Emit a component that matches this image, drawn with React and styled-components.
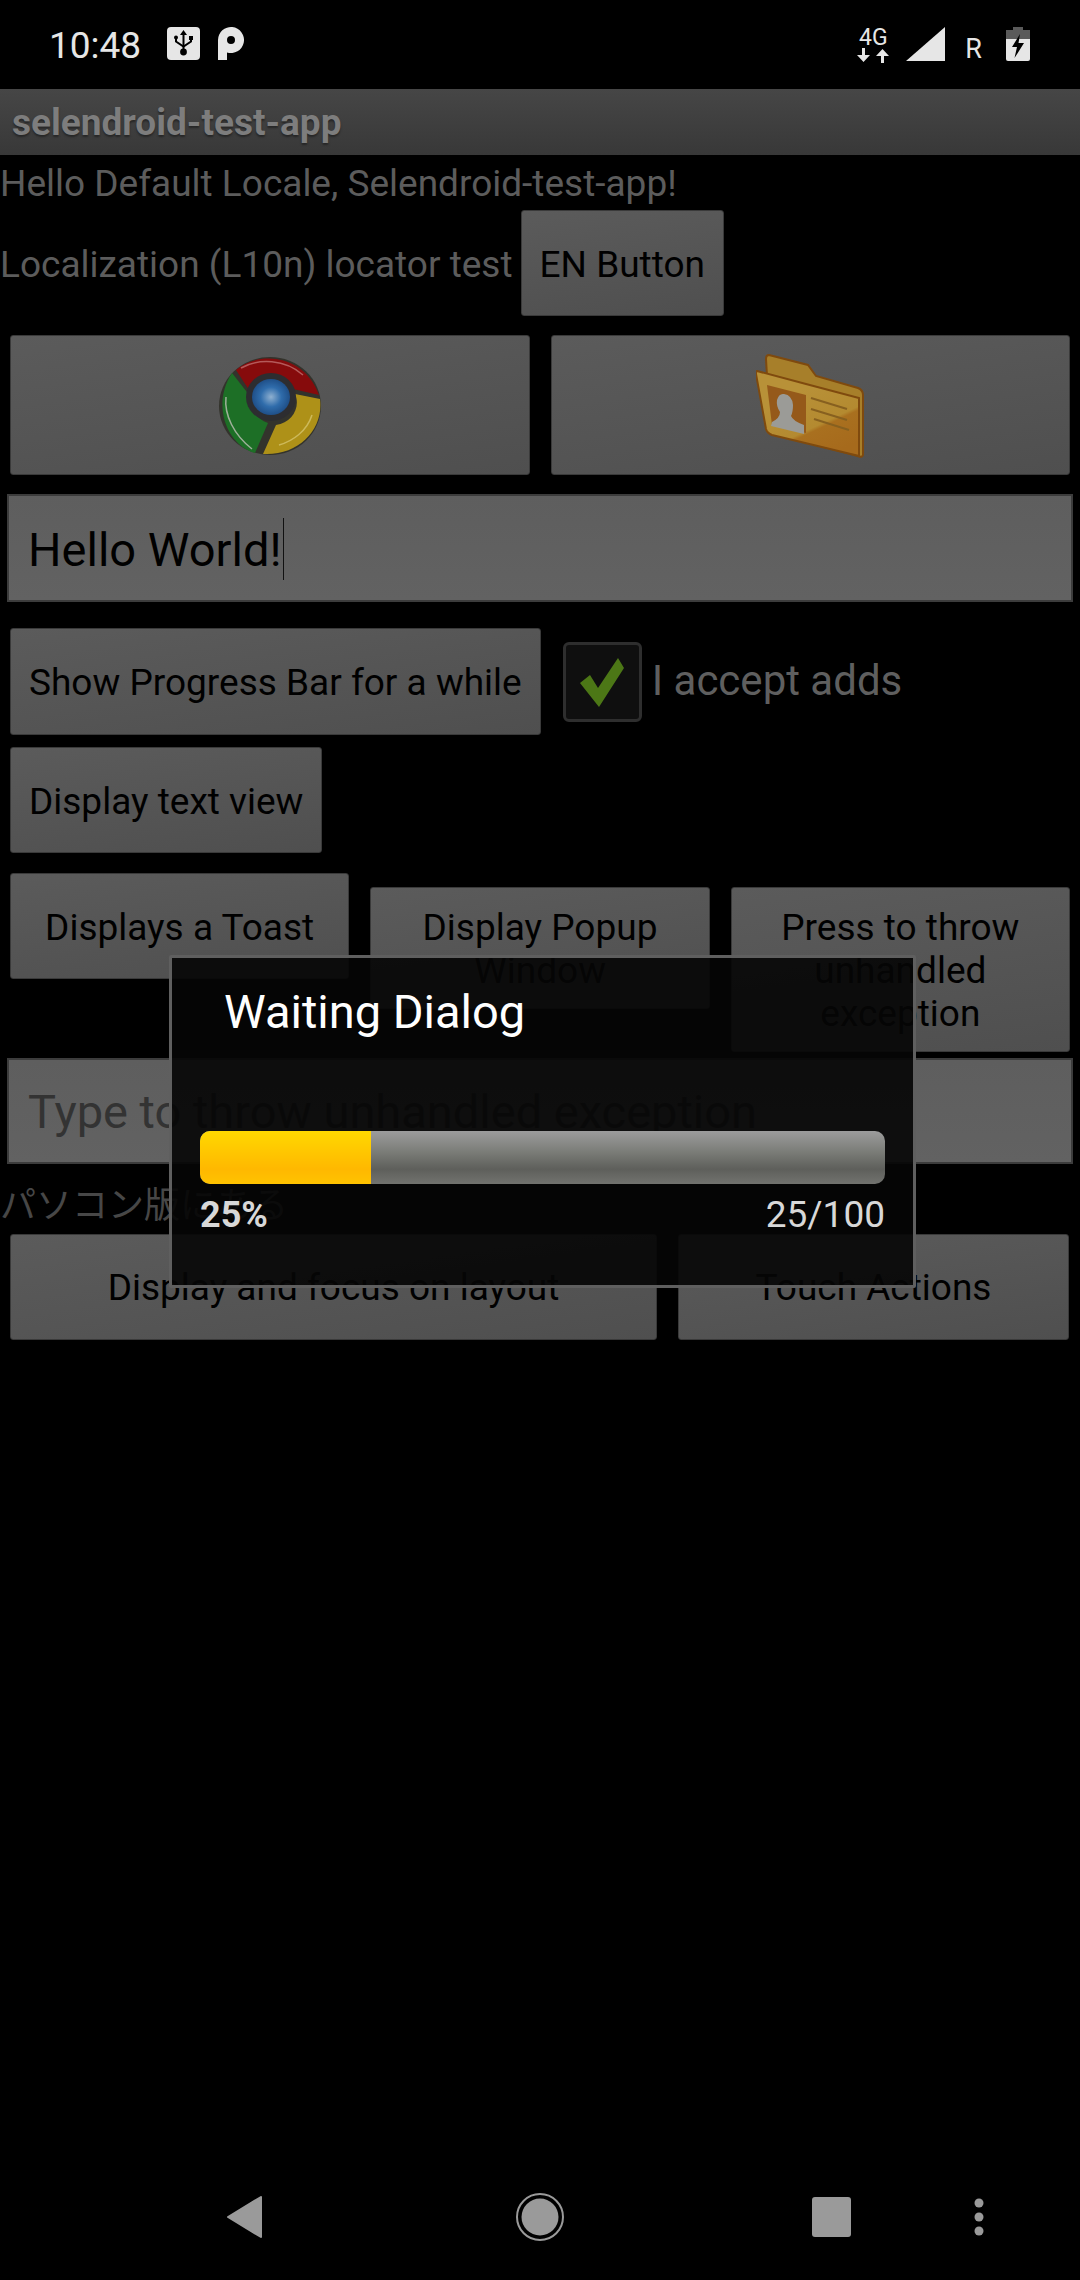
import styled, { createGlobalStyle } from "styled-components";

const GlobalStyle = createGlobalStyle`
  html, body {
    margin: 0;
    padding: 0;
    background: #000;
  }
  * {
    box-sizing: border-box;
  }
`;

const Screen = styled.div`
  position: relative;
  width: 1080px;
  height: 2280px;
  display: flex;
  flex-direction: column;
  overflow: hidden;
  background: #000;
  font-family: Roboto, "Noto Sans CJK JP", sans-serif;
  font-size: 37px;
`;

const StatusBar = styled.div`
  height: 89px;
  flex: none;
  display: flex;
  align-items: flex-start;
  justify-content: space-between;
  padding: 27px 50px 0 49px;
  color: #e6e6e6;
`;

const StatusGroup = styled.div`
  display: flex;
  align-items: flex-start;
`;

const Clock = styled.span`
  font-size: 37px;
  line-height: 37px;
  margin: 0 26px 0 0;
`;

const NetworkBadge = styled.div`
  width: 34px;
  margin-right: 16px;
  display: flex;
  flex-direction: column;
  align-items: center;
  font-size: 23px;
  line-height: 21px;
`;

const RoamingMark = styled.span`
  font-size: 27px;
  line-height: 27px;
  margin: 9px 24px 0 20px;
`;

const ActionBar = styled.div`
  height: 66px;
  flex: none;
  display: flex;
  align-items: center;
  padding: 0 0 0 12px;
  background: linear-gradient(#464646, #383838);
  color: #7d7d7d;
  font-size: 37px;
  font-weight: 700;
  text-shadow: 0 2px 2px #262626;
`;

const Content = styled.div`
  display: flex;
  flex-direction: column;
`;

const HelloText = styled.div`
  height: 43px;
  line-height: 57px;
  color: #5c5c5c;
  white-space: nowrap;
`;

const Row = styled.div`
  display: flex;
  align-items: ${(p) => p.$align || "flex-start"};
  gap: ${(p) => p.$gap || 0}px;
  margin-top: ${(p) => p.$top || 0}px;
  padding: 0 ${(p) => p.$side ?? 10}px;
`;

const Label = styled.span`
  padding-top: 3px;
  color: #5c5c5c;
  white-space: nowrap;
`;

const Button = styled.div`
  display: flex;
  align-items: center;
  justify-content: center;
  flex: ${(p) => p.$flex || "none"};
  min-width: 0;
  min-height: ${(p) => p.$height || 106}px;
  padding: 18px 18px 16px;
  margin-left: ${(p) => p.$left || 0}px;
  border: 1px solid #3a3a3a;
  border-radius: 3px;
  background: linear-gradient(172deg, #5b5b5b, #4f4f4f);
  color: #000;
  line-height: 43px;
  text-align: center;
  white-space: ${(p) => (p.$wrap ? "normal" : "nowrap")};
`;

const TextBox = styled.div`
  display: flex;
  align-items: center;
  height: ${(p) => p.$height || 108}px;
  margin-top: ${(p) => p.$top || 0}px;
  margin-left: 7px;
  width: 1066px;
  padding-left: 19px;
  padding-top: 2px;
  border: 2px solid #3c3c3c;
  background: linear-gradient(#5e5e5e, #626262);
  color: ${(p) => (p.$hint ? "#333" : "#000")};
  font-size: 47px;
  white-space: nowrap;
`;

const Caret = styled.span`
  width: 1px;
  height: 62px;
  margin-left: 1px;
  background: #111;
`;

const CheckBox = styled.div`
  flex: none;
  width: 79px;
  height: 80px;
  margin: 14px 10px 0 22px;
  display: flex;
  align-items: center;
  justify-content: center;
  border: 3px solid #2e2e2e;
  border-radius: 6px;
  background: #0f0f0f;
`;

const CheckLabel = styled.span`
  margin-top: 29px;
  color: #5f5f5f;
  font-size: 42px;
  line-height: 48px;
  white-space: nowrap;
`;

const JapaneseText = styled.div`
  height: 70px;
  padding-top: 17px;
  font-size: 36px;
  line-height: 50px;
  color: #474747;
  white-space: nowrap;
`;

const Dialog = styled.div`
  position: absolute;
  left: 169px;
  top: 955px;
  width: 747px;
  height: 333px;
  padding: 0 28px;
  border: 3px solid #5f5f5f;
  border-radius: 2px;
  background: rgba(5, 5, 5, 0.91);
`;

const DialogTitle = styled.div`
  height: 173px;
  padding: 24px 0 0 24px;
  color: #fff;
  font-size: 47px;
  line-height: 60px;
`;

const ProgressTrack = styled.div`
  height: 53px;
  border-radius: 10px;
  overflow: hidden;
  background: linear-gradient(#9c9c9c, #7a7c77 40%, #5e5f5b 72%, #72736f);
`;

const ProgressFill = styled.div`
  height: 100%;
  background: linear-gradient(#ffd800, #ffb800 72%, #ffc300);
`;

const ProgressInfo = styled.div`
  display: flex;
  justify-content: space-between;
  margin-top: 6px;
  color: #d8d8d8;
  line-height: 50px;
`;

const Percent = styled.span`
  font-weight: 700;
  font-size: 36px;
`;

const NavBar = styled.div`
  position: relative;
  margin-top: auto;
  height: 100px;
  flex: none;
  display: flex;
  align-items: center;
  padding: 0 0 26px 226px;
`;

const NavSlot = styled.div`
  width: ${(p) => p.$width}px;
  flex: none;
  display: flex;
`;

function UsbIcon() {
  return (
    <svg width="33" height="33" viewBox="0 0 33 33">
      <rect width="33" height="33" rx="4" fill="#e6e6e6" />
      <g stroke="#000" strokeWidth="2" fill="none">
        <path d="M16.5 5V24" />
        <path d="M9 11V14.5L16.5 19.5L24 14.5V11" />
      </g>
      <path d="M16.5 3L20 8H13Z" fill="#000" />
      <circle cx="16.5" cy="25" r="3.4" fill="#000" />
      <circle cx="9" cy="10.5" r="2" fill="#000" />
      <rect x="22" y="9" width="4" height="4" fill="#000" />
    </svg>
  );
}

function PIcon() {
  return (
    <svg width="26" height="33" viewBox="0 0 26 33" style={{ marginLeft: 18 }}>
      <path
        fillRule="evenodd"
        fill="#e6e6e6"
        d="M0 33V13A13 13 0 1 1 9 25.4V33ZM13 9A4 4 0 1 0 13 17A4 4 0 1 0 13 9Z"
      />
    </svg>
  );
}

function TransferArrows() {
  return (
    <svg width="34" height="15" viewBox="0 0 34 15">
      <path d="M6 0H9V7H14L7.5 14L1 7H6Z" fill="#e6e6e6" />
      <path d="M25 15H28V8H33L26.5 1L20 8H25Z" fill="#e6e6e6" />
    </svg>
  );
}

function SignalIcon() {
  return (
    <svg width="39" height="34" viewBox="0 0 39 34">
      <path d="M39 0V34H0Z" fill="#e6e6e6" />
    </svg>
  );
}

function BatteryIcon() {
  return (
    <svg width="24" height="34" viewBox="0 0 24 34">
      <path d="M7 0H17V3H24V12H0V3H7Z" fill="#5a5a5a" />
      <path d="M0 12H24V32Q24 34 22 34H2Q0 34 0 32Z" fill="#e6e6e6" />
      <path d="M14 7L6 20H11L8.5 31L18 16H12.5Z" fill="#000" />
    </svg>
  );
}

function ChromeIcon() {
  return (
    <svg width="102" height="98" viewBox="0 0 102 98">
      <defs>
        <radialGradient id="chromeBlue">
          <stop offset="0" stopColor="#8fb0d0" />
          <stop offset="0.55" stopColor="#2f6cab" />
          <stop offset="1" stopColor="#1f4f88" />
        </radialGradient>
      </defs>
      <ellipse cx="51" cy="49" rx="51" ry="49" fill="#33332c" />
      <path d="M17 13C38 -6 85 -4 100 38L74 32C62 18 40 22 32 36Z" fill="#860b0c" />
      <path d="M13 16L31 39C30 52 38 62 49 66L36 96C8 88 -8 48 13 16Z" fill="#1d6f26" />
      <path d="M76 37L101 42C105 72 80 99 44 97L57 68C73 66 82 50 76 37Z" fill="#ae9118" />
      <ellipse cx="52" cy="40" rx="25" ry="24" fill="#2d2d30" />
      <ellipse cx="52" cy="40" rx="19" ry="18" fill="url(#chromeBlue)" />
      <path d="M7 40C5 58 15 78 33 92" stroke="#9fb09a" strokeWidth="1.5" fill="none" />
      <path d="M22 11C40 1 66 2 84 18" stroke="#b45a5a" strokeWidth="1.5" fill="none" />
      <path d="M60 88C74 84 88 74 93 58" stroke="#cdb95a" strokeWidth="1.5" fill="none" />
    </svg>
  );
}

function FolderIcon() {
  return (
    <svg width="108" height="104" viewBox="0 0 108 104">
      <defs>
        <linearGradient id="folderFace" x1="0.3" y1="0.3" x2="0.7" y2="1">
          <stop offset="0" stopColor="#b89138" />
          <stop offset="0.55" stopColor="#b48a30" />
          <stop offset="0.6" stopColor="#a9701f" />
          <stop offset="1" stopColor="#a66a1c" />
        </linearGradient>
      </defs>
      <path
        d="M13 1L52 11L60 22L102 34Q107 36 107 41V101Q106 104 102 102L20 80Q15 78 14 74L10 5Q10 1 13 1Z"
        fill="#a77f2a"
        stroke="#7f4a0e"
        strokeWidth="2"
      />
      <path
        d="M1 17L50 30L103 44V102L16 81Q11 79 10 75L0 20Q0 17 1 17Z"
        fill="url(#folderFace)"
        stroke="#7f4a0e"
        strokeWidth="2"
      />
      <path d="M11 31L50 41V79L16 71Z" fill="#95591a" />
      <path
        d="M28 40Q36 41 37 51Q37 58 35 62Q37 67 48 71V80L15 72L16 68Q24 64 24 58Q20 52 21 46Q23 39 28 40Z"
        fill="#9b9b97"
      />
      <path
        d="M55 44L91 55M55 55L91 66M58 65L93 76"
        stroke="#87601f"
        strokeWidth="2"
        fill="none"
      />
    </svg>
  );
}

function CheckMark() {
  return (
    <svg width="48" height="52" viewBox="0 0 48 52">
      <path d="M2 27L12 19L20 32L40 2L46 12L21 51Z" fill="#4c7716" />
    </svg>
  );
}

function BackIcon() {
  return (
    <svg width="37" height="42" viewBox="0 0 37 42">
      <path d="M35 1V41L2 21Z" fill="#9a9a9a" stroke="#9a9a9a" strokeWidth="2" strokeLinejoin="round" />
    </svg>
  );
}

function HomeIcon() {
  return (
    <svg width="48" height="48" viewBox="0 0 48 48">
      <circle cx="24" cy="24" r="23" fill="none" stroke="#9a9a9a" strokeWidth="2" />
      <circle cx="24" cy="24" r="18.5" fill="#9a9a9a" />
    </svg>
  );
}

function RecentsIcon() {
  return (
    <svg width="39" height="40" viewBox="0 0 39 40">
      <rect width="39" height="40" rx="3" fill="#9a9a9a" />
    </svg>
  );
}

function MenuIcon() {
  return (
    <svg width="10" height="38" viewBox="0 0 10 38">
      <circle cx="5" cy="5" r="4.5" fill="#9a9a9a" />
      <circle cx="5" cy="19" r="4.5" fill="#9a9a9a" />
      <circle cx="5" cy="33" r="4.5" fill="#9a9a9a" />
    </svg>
  );
}

export default function App() {
  const progress = 25;

  return (
    <Screen>
      <GlobalStyle />
      <StatusBar>
        <StatusGroup>
          <Clock>10:48</Clock>
          <UsbIcon />
          <PIcon />
        </StatusGroup>
        <StatusGroup>
          <NetworkBadge>
            4G
            <TransferArrows />
          </NetworkBadge>
          <SignalIcon />
          <RoamingMark>R</RoamingMark>
          <BatteryIcon />
        </StatusGroup>
      </StatusBar>

      <ActionBar>selendroid-test-app</ActionBar>

      <Content>
        <HelloText>Hello Default Locale, Selendroid-test-app!</HelloText>

        <Row $top={12} $side={0} $align="center">
          <Label>Localization (L10n) locator test</Label>
          <Button $left={8}>EN Button</Button>
        </Row>

        <Row $top={19} $gap={21}>
          <Button $flex="1" $height={140}>
            <ChromeIcon />
          </Button>
          <Button $flex="1" $height={140}>
            <FolderIcon />
          </Button>
        </Row>

        <TextBox $top={19}>
          Hello World!
          <Caret />
        </TextBox>

        <Row $top={26}>
          <Button $height={107}>Show Progress Bar for a while</Button>
          <CheckBox>
            <CheckMark />
          </CheckBox>
          <CheckLabel>I accept adds</CheckLabel>
        </Row>

        <Row $top={12}>
          <Button>Display text view</Button>
        </Row>

        <Row $top={20} $gap={21} $align="baseline">
          <Button $flex="1" $wrap>Displays a Toast</Button>
          <Button $flex="1" $wrap>Display Popup Window</Button>
          <Button $flex="1" $wrap>Press to throw unhandled exception</Button>
        </Row>

        <TextBox $top={6} $height={106} $hint>
          Type to throw unhandled exception
        </TextBox>

        <JapaneseText>パソコン版にある</JapaneseText>

        <Row $gap={21}>
          <Button $flex="0 0 647px">Display and focus on layout</Button>
          <Button $flex="0 0 391px">Touch Actions</Button>
        </Row>
      </Content>

      <Dialog>
        <DialogTitle>Waiting Dialog</DialogTitle>
        <ProgressTrack>
          <ProgressFill style={{ width: `${progress}%` }} />
        </ProgressTrack>
        <ProgressInfo>
          <Percent>{progress}%</Percent>
          <span>{progress}/100</span>
        </ProgressInfo>
      </Dialog>

      <NavBar>
        <NavSlot $width={290}>
          <BackIcon />
        </NavSlot>
        <NavSlot $width={296}>
          <HomeIcon />
        </NavSlot>
        <NavSlot $width={162}>
          <RecentsIcon />
        </NavSlot>
        <MenuIcon />
      </NavBar>
    </Screen>
  );
}
